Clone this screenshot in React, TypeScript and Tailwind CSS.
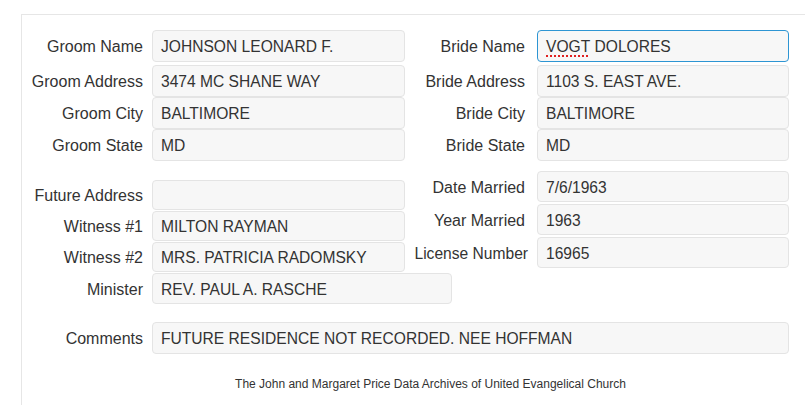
import React from 'react';

type Field = { label: string; value: string };

const groom: Field[] = [
  { label: 'Groom Name', value: 'JOHNSON LEONARD F.' },
  { label: 'Groom Address', value: '3474 MC SHANE WAY' },
  { label: 'Groom City', value: 'BALTIMORE' },
  { label: 'Groom State', value: 'MD' }
];

const bride: Field[] = [
  { label: 'Bride Address', value: '1103 S. EAST AVE.' },
  { label: 'Bride City', value: 'BALTIMORE' },
  { label: 'Bride State', value: 'MD' }
];

const others: Field[] = [
  { label: 'Future Address', value: '' },
  { label: 'Witness #1', value: 'MILTON RAYMAN' },
  { label: 'Witness #2', value: 'MRS. PATRICIA RADOMSKY' }
];

const marriage: Field[] = [
  { label: 'Date Married', value: '7/6/1963' },
  { label: 'Year Married', value: '1963' },
  { label: 'License Number', value: '16965' }
];

const box = 'flex items-center bg-[#f7f7f7] border border-[#e4e4e4] rounded-[4px] px-[8px] pt-[2px] text-[15.6px] text-[#333]';

const Row = ({
  label,
  children,
  labelW,
  gap,
  labelClass = '',
  className = ''
}: {
  label: string;
  children: React.ReactNode;
  labelW: string;
  gap: string;
  labelClass?: string;
  className?: string;
}) => (
  <div className={`flex items-center ${gap} ${className}`}>
    <label className={`${labelW} shrink-0 pt-[2px] text-right whitespace-nowrap text-[#333] ${labelClass}`}>{label}</label>
    {children}
  </div>
);

export default function App() {
  return (
    <div className="w-[805px] h-[405px] overflow-hidden bg-white text-[16px] leading-[20px]" style={{ fontFamily: '"Liberation Sans", Arial, sans-serif' }}>
      <div className="ml-[21px] mt-[14px] w-[818px] min-h-[420px] border-t border-l border-[#e6e6e6] pt-[15px]">
        {/* groom / bride */}
        <div className="flex">
          <div className="w-[383px] flex flex-col">
            {groom.map((f, i) => (
              <Row key={f.label} label={f.label} labelW="w-[121px]" gap="gap-[9px]" className={i === 0 ? 'mb-[3px]' : ''}>
                <div className={`${box} w-[253px] h-[32px]`}>{f.value}</div>
              </Row>
            ))}
          </div>
          <div className="flex flex-col">
            <Row label="Bride Name" labelW="w-[120px]" gap="gap-[12px]" className="mb-[3px]">
              <div className="flex items-center w-[252px] h-[32px] bg-[#f7f7f7] border border-[#2d95d3] rounded-[4px] px-[8px] pt-[2px] text-[15.6px] text-[#333]">
                <span className="underline decoration-dotted decoration-[#e02020] decoration-2 underline-offset-[3px]">VOGT</span>
                <span>&nbsp;DOLORES</span>
              </div>
            </Row>
            {bride.map((f) => (
              <Row key={f.label} label={f.label} labelW="w-[120px]" gap="gap-[12px]">
                <div className={`${box} w-[252px] h-[32px]`}>{f.value}</div>
              </Row>
            ))}
          </div>
        </div>

        {/* others / marriage */}
        <div className="flex items-start">
          <div className="w-[383px] mt-[19px] flex flex-col gap-[1px]">
            {others.map((f) => (
              <Row key={f.label} label={f.label} labelW="w-[121px]" gap="gap-[9px]">
                <div className={`${box} w-[253px] h-[30px]`}>{f.value}</div>
              </Row>
            ))}
            <Row label="Minister" labelW="w-[121px]" gap="gap-[9px]">
              <div className={`${box} w-[300px] h-[31px] shrink-0`}>REV. PAUL A. RASCHE</div>
            </Row>
          </div>
          <div className="mt-[10px] flex flex-col gap-[2px]">
            {marriage.map((f) => (
              <Row
                key={f.label}
                label={f.label}
                labelW="w-[120px]"
                gap="gap-[12px]"
                labelClass={f.label === 'License Number' ? 'text-[15.6px] translate-x-[3px]' : ''}
              >
                <div className={`${box} w-[252px] h-[31px]`}>{f.value}</div>
              </Row>
            ))}
          </div>
        </div>

        {/* comments */}
        <Row label="Comments" labelW="w-[121px]" gap="gap-[9px]" className="mt-[18px]">
          <div className={`${box} w-[637px] h-[32px]`}>FUTURE RESIDENCE NOT RECORDED. NEE HOFFMAN</div>
        </Row>

        <p className="mt-[22px] text-center text-[12px] leading-[16px] text-[#333]">
          The John and Margaret Price Data Archives of United Evangelical Church
        </p>
      </div>
    </div>
  );
}
